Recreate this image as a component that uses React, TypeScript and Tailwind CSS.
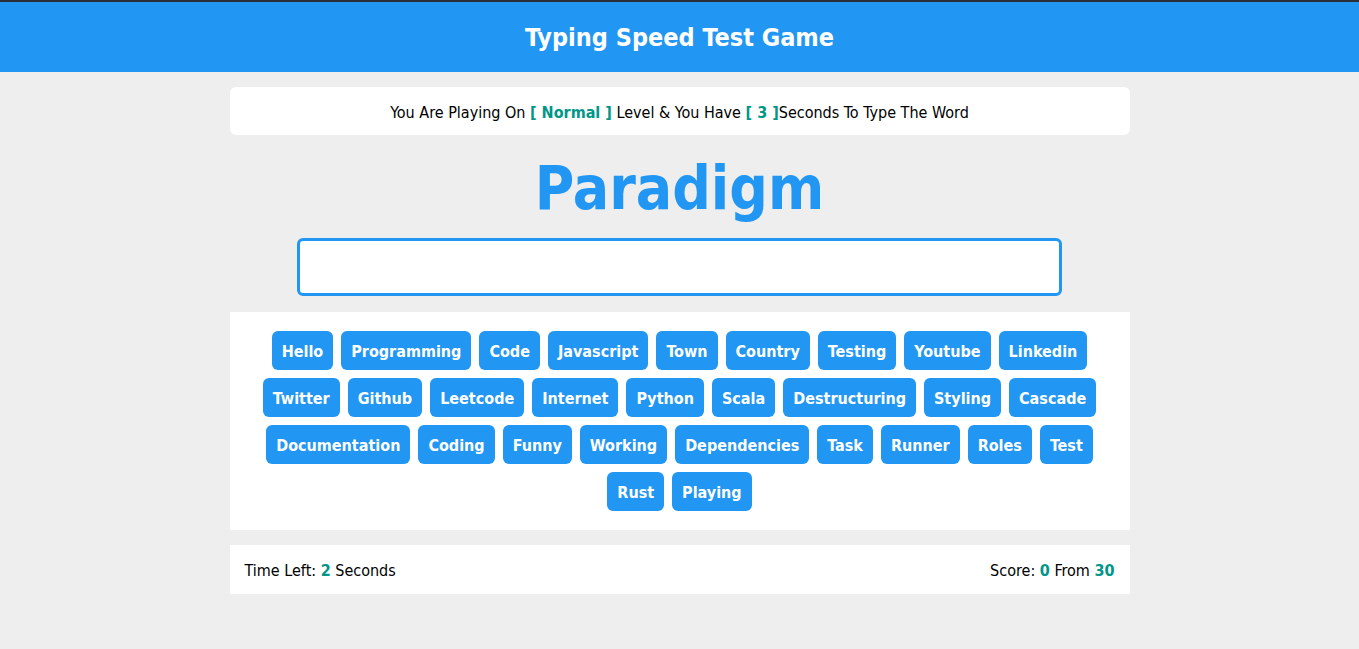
import React from 'react';

const words = [
  'Hello', 'Programming', 'Code', 'Javascript', 'Town', 'Country', 'Testing', 'Youtube', 'Linkedin',
  'Twitter', 'Github', 'Leetcode', 'Internet', 'Python', 'Scala', 'Destructuring', 'Styling', 'Cascade',
  'Documentation', 'Coding', 'Funny', 'Working', 'Dependencies', 'Task', 'Runner', 'Roles', 'Test',
  'Rust', 'Playing',
];

const font = { fontFamily: '"DejaVu Sans Condensed", "DejaVu Sans", sans-serif' };

export default function App() {
  return (
    <div className="min-h-[649px] bg-[#eeeeee] text-black" style={font}>
      {/* header */}
      <div className="h-[72px] bg-[#2196f3] border-t-2 border-[#2b2f33] pt-[2px] flex items-center justify-center">
        <h1 className="text-[25px] font-bold text-white">Typing Speed Test Game</h1>
      </div>

      <div className="w-[900px] mx-auto pt-[15px]">
        {/* message */}
        <div className="bg-white rounded-md h-[48px] pt-[3px] flex items-center justify-center text-[16px]">
          You Are Playing On&nbsp;<span className="text-[#009688] font-bold">[ Normal ]</span>&nbsp;Level &amp; You Have&nbsp;
          <span className="text-[#009688] font-bold">[ 3 ]</span>Seconds To Type The Word
        </div>

        {/* current word */}
        <div className="h-[103px] pt-[2px] flex items-center justify-center">
          <div className="text-[60px] font-bold text-[#2196f3] leading-none">Paradigm</div>
        </div>

        <input
          type="text"
          className="block mx-auto w-[765px] h-[58px] bg-white border-[3px] border-[#2196f3] rounded-md outline-none"
        />

        {/* upcoming words */}
        <div className="mt-4 bg-white py-[19px] px-[20px] flex flex-wrap justify-center gap-2">
          {words.map(w => (
            <span
              key={w}
              className="bg-[#2196f3] text-white font-bold text-[16px] leading-[19px] px-[10px] pt-[11px] pb-[9px] rounded-[6px]"
            >
              {w}
            </span>
          ))}
        </div>

        {/* control */}
        <div className="mt-[15px] bg-white h-[49px] px-[15px] pt-[2px] flex items-center justify-between text-[16px]">
          <div>
            Time Left: <span className="text-[#009688] font-bold">2</span> Seconds
          </div>
          <div>
            Score: <span className="text-[#009688] font-bold">0</span> From{' '}
            <span className="text-[#009688] font-bold">30</span>
          </div>
        </div>
      </div>
    </div>
  );
}
